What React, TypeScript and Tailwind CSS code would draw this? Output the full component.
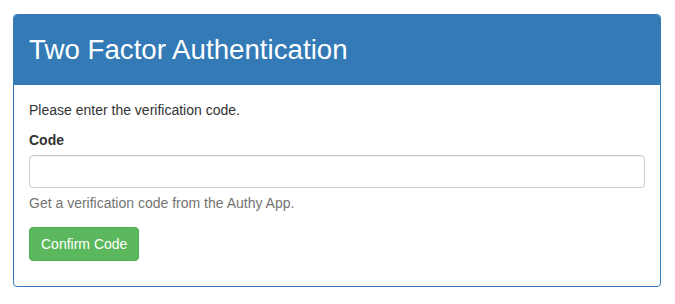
export default function App() {
  return (
    <div className="min-h-screen bg-white pt-[14px] pl-[13px] pr-[14px] font-['Liberation_Sans',Arial,sans-serif] text-[14px] leading-[20px] text-[#333]">
      <div className="rounded-[4px] border border-[#337ab7] bg-white">
        <div className="flex h-[70px] items-center rounded-t-[3px] bg-[#337ab7] px-[15px] text-white">
          <h1 className="text-[27.7px] leading-[32px]">Two Factor Authentication</h1>
        </div>
        <div className="px-[15px] pt-[15px] pb-[25px]">
          <p className="mb-[10px]">Please enter the verification code.</p>
          <label className="mb-[5px] block font-bold">Code</label>
          <input
            type="text"
            className="block h-[33px] w-full rounded-[4px] border border-[#ccc] px-3 shadow-[inset_0_1px_1px_rgba(0,0,0,0.075)] outline-none"
          />
          <p className="mt-[5px] mb-[14px] text-[#737373]">Get a verification code from the Authy App.</p>
          <button className="h-[34px] rounded-[4px] border border-[#4cae4c] bg-[#5cb85c] px-[11px] text-white">
            Confirm Code
          </button>
        </div>
      </div>
    </div>
  );
}
